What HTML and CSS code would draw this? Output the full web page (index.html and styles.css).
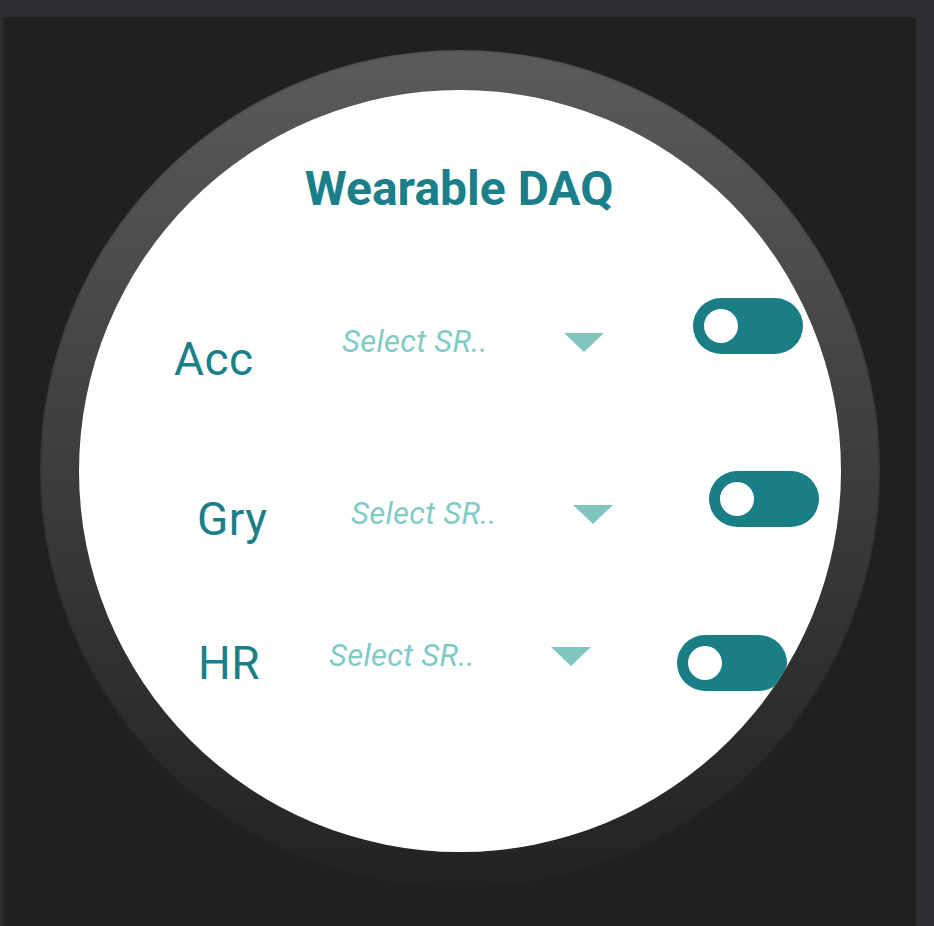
FILE: index.html
```html
<!DOCTYPE html>
<html lang="en">
<head>
<meta charset="utf-8">
<title>Wearable DAQ</title>
<link rel="stylesheet" href="styles.css">
</head>
<body>
<div class="frame">
  <div class="bezel">
    <div class="screen">
      <h1 class="title">Wearable DAQ</h1>

      <div class="row row-acc">
        <div class="label">Acc</div>
        <div class="spinner">
          <span class="spin-text">Select SR..</span>
          <span class="caret"></span>
        </div>
        <div class="switch"><span class="knob"></span></div>
      </div>

      <div class="row row-gry">
        <div class="label">Gry</div>
        <div class="spinner">
          <span class="spin-text">Select SR..</span>
          <span class="caret"></span>
        </div>
        <div class="switch"><span class="knob"></span></div>
      </div>

      <div class="row row-hr">
        <div class="label">HR</div>
        <div class="spinner">
          <span class="spin-text">Select SR..</span>
          <span class="caret"></span>
        </div>
        <div class="switch"><span class="knob"></span></div>
      </div>
    </div>
  </div>
</div>
</body>
</html>
```

FILE: styles.css
```css
html, body {
  margin: 0;
  padding: 0;
}

body {
  background: #2b2d30;
  font-family: Roboto, "Liberation Sans", sans-serif;
  overflow: hidden;
}

.frame {
  margin: 17px 0 0 3px;
  width: 913px;
  height: 909px;
  background: #202020;
  overflow: hidden;
}

.bezel {
  margin: 33px 0 0 37px;
  width: 840px;
  height: 840px;
  box-sizing: border-box;
  padding: 40px 39px 38px;
  border-radius: 50%;
  background: linear-gradient(to bottom, #5b5b5b 0%, #3d3d3d 50%, #222222 100%);
  box-shadow: inset 0 0 3px rgba(0, 0, 0, 0.35);
}

.screen {
  width: 762px;
  height: 762px;
  border-radius: 50%;
  background: #ffffff;
  overflow: hidden;
  display: flex;
  flex-direction: column;
}

.title {
  margin: 75px 0 0;
  padding-right: 2px;
  text-align: center;
  font-size: 48px;
  line-height: 48px;
  font-weight: 700;
  color: #1a7f89;
}

.row {
  display: grid;
  height: 56px;
  align-items: start;
  flex-shrink: 0;
}

.row-acc {
  margin-top: 85px;
  padding-left: 95px;
  grid-template-columns: 168px 351px 110px;
  --label-top: 38px;
  --spin-top: 28px;
}

.row-gry {
  margin-top: 117px;
  padding-left: 118px;
  grid-template-columns: 154px 358px 110px;
  --label-top: 25px;
  --spin-top: 27px;
}

.row-hr {
  margin-top: 108px;
  padding-left: 119px;
  grid-template-columns: 131px 348px 110px;
  --label-top: 5px;
  --spin-top: 5px;
}

.label {
  margin-top: var(--label-top);
  font-size: 46px;
  line-height: 46px;
  letter-spacing: 0.5px;
  color: #1a7f89;
  white-space: nowrap;
}

.spinner {
  margin-top: var(--spin-top);
  display: flex;
  align-items: flex-start;
}

.spin-text {
  width: 222px;
  flex-shrink: 0;
  font-size: 31px;
  line-height: 31px;
  letter-spacing: 0.3px;
  font-style: italic;
  color: #80cbc4;
  white-space: nowrap;
}

.caret {
  margin-top: 7px;
  width: 0;
  height: 0;
  border-left: 20px solid transparent;
  border-right: 20px solid transparent;
  border-top: 19px solid #80c6be;
}

.switch {
  width: 110px;
  height: 56px;
  box-sizing: border-box;
  padding-left: 11px;
  border-radius: 28px;
  background: #1a7e87;
  display: flex;
  align-items: center;
}

.knob {
  width: 34px;
  height: 34px;
  border-radius: 50%;
  background: #ffffff;
}
```
